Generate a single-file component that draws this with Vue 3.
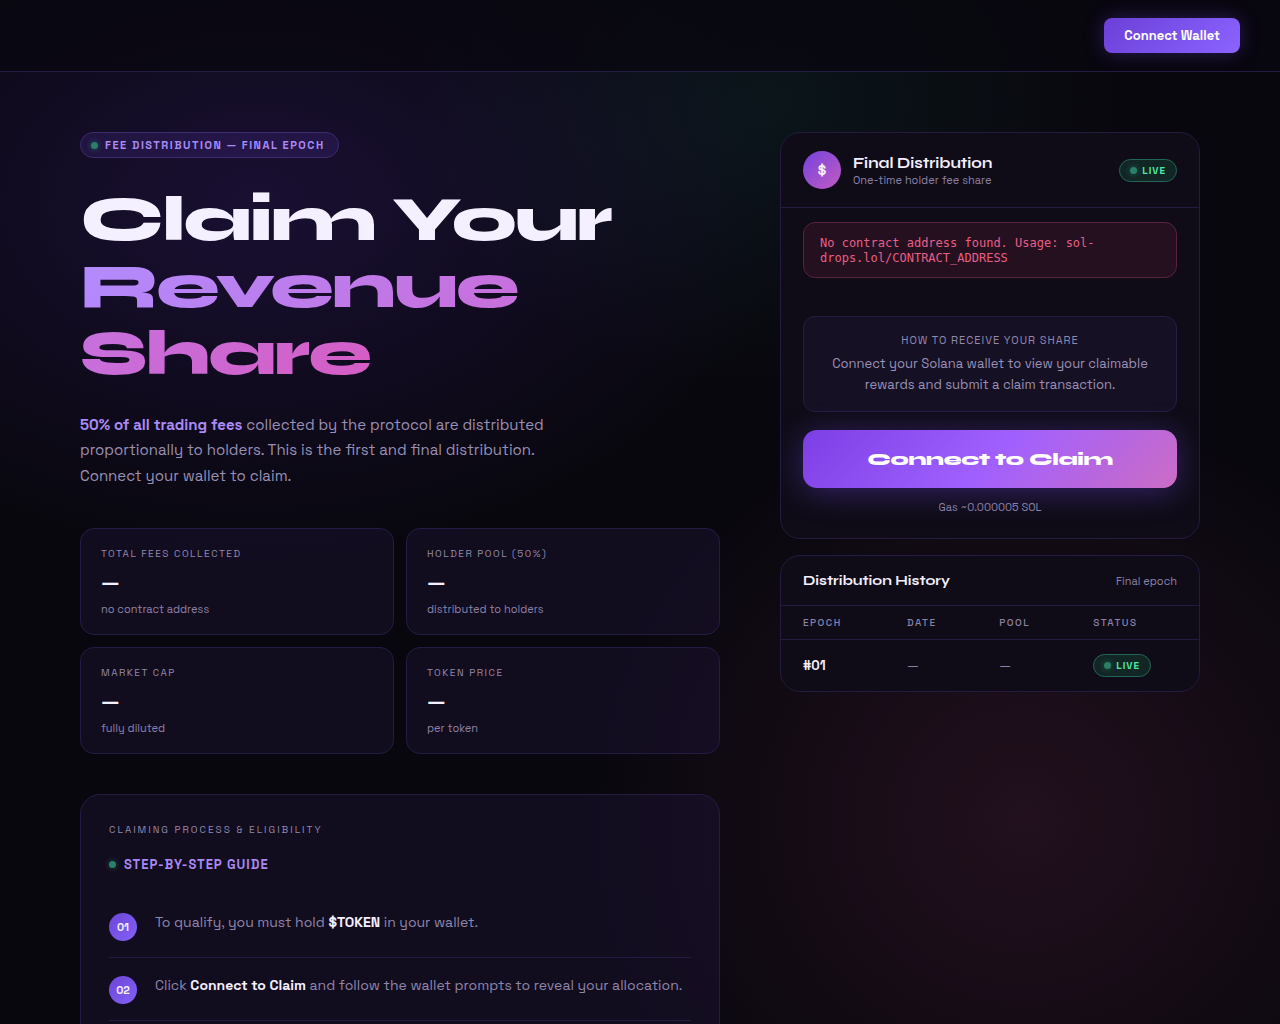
<template>
  <div class="page">
    <header class="topbar">
      <button type="button" class="wallet-btn">Connect Wallet</button>
    </header>

    <main class="layout">
      <section class="hero">
        <div class="badge">
          <span class="dot"></span>
          <span>Fee Distribution — Final Epoch</span>
        </div>
        <h1>
          Claim Your<br />
          <span class="gradient">Revenue<br />Share</span>
        </h1>
        <p class="lead">
          <strong>50% of all trading fees</strong> collected by the protocol are distributed
          proportionally to holders. This is the first and final distribution. Connect your wallet to claim.
        </p>

        <div class="stats">
          <div v-for="stat in stats" :key="stat.label" class="stat">
            <div class="stat-label">{{ stat.label }}</div>
            <div class="stat-value">{{ stat.value }}</div>
            <div class="stat-sub">{{ stat.sub }}</div>
          </div>
        </div>

        <div class="guide">
          <div class="guide-label">Claiming Process &amp; Eligibility</div>
          <h2 class="guide-title"><span class="dot"></span>Step-by-Step Guide</h2>
          <ol class="steps">
            <li v-for="(step, i) in steps" :key="i">
              <span class="step-num">0{{ i + 1 }}</span>
              <p>{{ step.before }} <strong>{{ step.strong }}</strong> {{ step.after }}</p>
            </li>
          </ol>
        </div>
      </section>

      <aside class="side">
        <section class="card">
          <div class="card-head">
            <div class="coin">$</div>
            <div class="card-title">
              <h2>Final Distribution</h2>
              <p>One-time holder fee share</p>
            </div>
            <span class="live"><span class="dot"></span>Live</span>
          </div>
          <div class="card-body">
            <div class="error" role="alert">No contract address found. Usage: sol-drops.lol/CONTRACT_ADDRESS</div>
            <div class="how">
              <div class="how-label">How to receive your share</div>
              <p>Connect your Solana wallet to view your claimable rewards and submit a claim transaction.</p>
            </div>
            <button type="button" class="claim-btn">Connect to Claim</button>
            <p class="gas">Gas ~0.000005 SOL</p>
          </div>
        </section>

        <section class="card">
          <div class="history-head">
            <h3>Distribution History</h3>
            <span>Final epoch</span>
          </div>
          <table class="history">
            <thead>
              <tr>
                <th v-for="col in columns" :key="col">{{ col }}</th>
              </tr>
            </thead>
            <tbody>
              <tr>
                <td class="epoch">#01</td>
                <td>—</td>
                <td>—</td>
                <td>
                  <span class="live"><span class="dot"></span>Live</span>
                </td>
              </tr>
            </tbody>
          </table>
        </section>
      </aside>
    </main>
  </div>
</template>

<script setup>
const stats = [
  { label: 'Total Fees Collected', value: '—', sub: 'no contract address' },
  { label: 'Holder Pool (50%)', value: '—', sub: 'distributed to holders' },
  { label: 'Market Cap', value: '—', sub: 'fully diluted' },
  { label: 'Token Price', value: '—', sub: 'per token' }
]

const steps = [
  { before: 'To qualify, you must hold', strong: '$TOKEN', after: 'in your wallet.' },
  { before: 'Click', strong: 'Connect to Claim', after: 'and follow the wallet prompts to reveal your allocation.' }
]

const columns = ['Epoch', 'Date', 'Pool', 'Status']
</script>

<style>
body {
  margin: 0;
  background: #08070d;
}
</style>

<style scoped>
.page {
  height: 100vh;
  overflow: hidden;
  color: #f5f0ff;
  font-family: 'Space Grotesk', Inter, sans-serif;
  background:
    radial-gradient(ellipse 60% 50% at 20% 20%, rgba(112, 58, 237, 0.17), transparent 70%),
    radial-gradient(ellipse 50% 60% at 80% 80%, rgba(220, 80, 150, 0.12), transparent 70%),
    radial-gradient(ellipse 40% 40% at 60% 10%, rgba(45, 190, 180, 0.08), transparent 70%),
    #08070d;
}

h1,
h2,
h3,
p {
  margin: 0;
}

.topbar {
  display: flex;
  justify-content: flex-end;
  padding: 18px 40px;
  border-bottom: 1px solid #231b42;
  background: rgba(8, 7, 15, 0.75);
}

.wallet-btn {
  height: 35px;
  padding: 0 20px;
  border: 0;
  border-radius: 8px;
  color: #fff;
  font: 600 13px 'Space Grotesk', Inter, sans-serif;
  background: linear-gradient(135deg, #6b40d8, #8b63ff);
  box-shadow: 0 0 20px rgba(124, 77, 255, 0.3);
}

.layout {
  display: grid;
  grid-template-columns: minmax(0, 1fr) 420px;
  gap: 60px;
  align-items: start;
  max-width: 1120px;
  margin: 0 auto;
  padding: 60px 40px;
}

.dot {
  flex: none;
  width: 7px;
  height: 7px;
  border-radius: 50%;
  background: #2b7f67;
  box-shadow: 0 0 6px rgba(52, 211, 153, 0.4);
}

.badge {
  display: flex;
  align-items: center;
  gap: 7px;
  width: fit-content;
  height: 24px;
  padding: 0 13px 0 10px;
  border: 1px solid #3d2a70;
  border-radius: 13px;
  color: #a98af5;
  font-size: 11px;
  font-weight: 600;
  letter-spacing: 0.14em;
  text-transform: uppercase;
  background: rgba(124, 77, 255, 0.13);
}

h1 {
  margin-top: 28px;
  font-family: Syne, 'DejaVu Sans', sans-serif;
  font-size: 64px;
  font-weight: 800;
  line-height: 1.05;
  letter-spacing: -0.03em;
}

.gradient {
  color: transparent;
  background: linear-gradient(135deg, #b18cff, #d65cc4);
  background-clip: text;
  -webkit-background-clip: text;
}

.lead {
  max-width: 480px;
  margin-top: 24px;
  color: #9a90b5;
  font-size: 15px;
  line-height: 1.7;
}

.lead strong {
  color: #ab8bf7;
  font-weight: 600;
}

.stats {
  display: grid;
  grid-template-columns: 1fr 1fr;
  gap: 12px;
  margin-top: 40px;
}

.stat {
  padding: 18px 20px;
  border: 1px solid #241c44;
  border-radius: 14px;
  background: rgba(27, 18, 50, 0.5);
}

.stat-label,
.guide-label {
  color: #9389ad;
  font-size: 10px;
  font-weight: 400;
  line-height: 13px;
  letter-spacing: 0.15em;
  text-transform: uppercase;
}

.stat-value {
  margin-top: 10px;
  font-family: Syne, 'DejaVu Sans', sans-serif;
  font-size: 22px;
  font-weight: 700;
  line-height: 27px;
}

.stat-sub {
  margin-top: 5px;
  color: #8c82a8;
  font-size: 11px;
  line-height: 14px;
}

.guide {
  margin-top: 40px;
  padding: 28px;
  border: 1px solid #241c44;
  border-radius: 20px;
  background: rgba(27, 18, 50, 0.5);
}

.guide-label {
  letter-spacing: 0.2em;
}

.guide-title {
  display: flex;
  align-items: center;
  gap: 8px;
  margin-top: 20px;
  color: #a98af5;
  font-size: 13px;
  font-weight: 600;
  line-height: 17px;
  letter-spacing: 1px;
  text-transform: uppercase;
}

.steps {
  margin: 22px 0 0;
  padding: 0;
  list-style: none;
}

.steps li {
  display: flex;
  gap: 18px;
  padding: 16px 0;
  border-bottom: 1px solid #241c44;
}

.step-num {
  display: grid;
  flex: none;
  place-items: center;
  width: 28px;
  height: 28px;
  margin-top: 2px;
  border-radius: 50%;
  font-size: 11px;
  font-weight: 600;
  background: linear-gradient(135deg, #6b46d8, #8460f5);
}

.steps p {
  color: #9086aa;
  font-size: 14px;
  line-height: 22px;
}

.steps strong {
  color: #f5f0ff;
  font-weight: 600;
}

.side {
  display: grid;
  gap: 16px;
}

.card {
  overflow: hidden;
  border: 1px solid #231b40;
  border-radius: 20px;
  background: #0f0c17;
}

.card-head {
  display: flex;
  align-items: center;
  gap: 12px;
  padding: 18px 22px;
  border-bottom: 1px solid #231b40;
}

.coin {
  display: grid;
  place-items: center;
  width: 38px;
  height: 38px;
  border-radius: 50%;
  font-size: 14px;
  font-weight: 700;
  background: linear-gradient(135deg, #7443dc, #c35bc4);
}

.card-title {
  flex: 1;
}

.card-title h2,
.history-head h3 {
  font-family: Syne, 'DejaVu Sans', sans-serif;
  font-size: 15px;
  font-weight: 700;
  line-height: 20px;
}

.history-head h3 {
  font-size: 14px;
}

.card-title p {
  color: #8c82a8;
  font-size: 11px;
  line-height: 15px;
}

.live {
  display: inline-flex;
  align-items: center;
  gap: 5px;
  height: 21px;
  padding: 0 10px;
  border: 1px solid #246656;
  border-radius: 12px;
  color: #4fe9a6;
  font-size: 10px;
  font-weight: 600;
  letter-spacing: 1px;
  text-transform: uppercase;
  background: #122625;
}

.card-body {
  padding: 14px 22px 24px;
}

.error {
  padding: 13px 16px 11px;
  border: 1px solid #572440;
  border-radius: 12px;
  color: #e85f86;
  font-family: 'DejaVu Sans Mono', monospace;
  font-size: 12px;
  line-height: 15px;
  background: #24101f;
}

.how {
  margin-top: 38px;
  padding: 16px 20px;
  border: 1px solid #251d42;
  border-radius: 12px;
  text-align: center;
  background: #161024;
}

.how-label {
  color: #9389ad;
  font-size: 11px;
  line-height: 14px;
  letter-spacing: 1px;
  text-transform: uppercase;
}

.how p {
  margin-top: 6px;
  color: #9a90b5;
  font-size: 13px;
  line-height: 21px;
}

.claim-btn {
  width: 100%;
  height: 58px;
  margin-top: 18px;
  border: 0;
  border-radius: 14px;
  color: #fff;
  font: 800 18px Syne, 'DejaVu Sans', sans-serif;
  letter-spacing: -0.02em;
  background: linear-gradient(135deg, #7c3fe4, #a060ff 50%, #cc6cc4);
  box-shadow: 0 4px 30px rgba(124, 77, 255, 0.35);
}

.gas {
  margin-top: 12px;
  color: #8c82a8;
  font-size: 11px;
  line-height: 14px;
  text-align: center;
}

.history-head {
  display: flex;
  align-items: center;
  justify-content: space-between;
  height: 49px;
  padding: 0 22px;
  border-bottom: 1px solid #231b40;
}

.history-head span {
  color: #8c82a8;
  font-size: 11px;
}

.history {
  width: 100%;
  border-collapse: collapse;
}

.history th,
.history td {
  padding: 0 22px;
  text-align: left;
}

.history th {
  height: 33px;
  border-bottom: 1px solid #231b40;
  color: #8c82a8;
  font-size: 10px;
  font-weight: 500;
  letter-spacing: 0.15em;
  text-transform: uppercase;
}

.history td {
  height: 51px;
  color: #8c82a8;
  font-size: 13px;
}

.history .live {
  vertical-align: middle;
}

.history .epoch {
  color: #f5f0ff;
  font-weight: 600;
}
</style>
